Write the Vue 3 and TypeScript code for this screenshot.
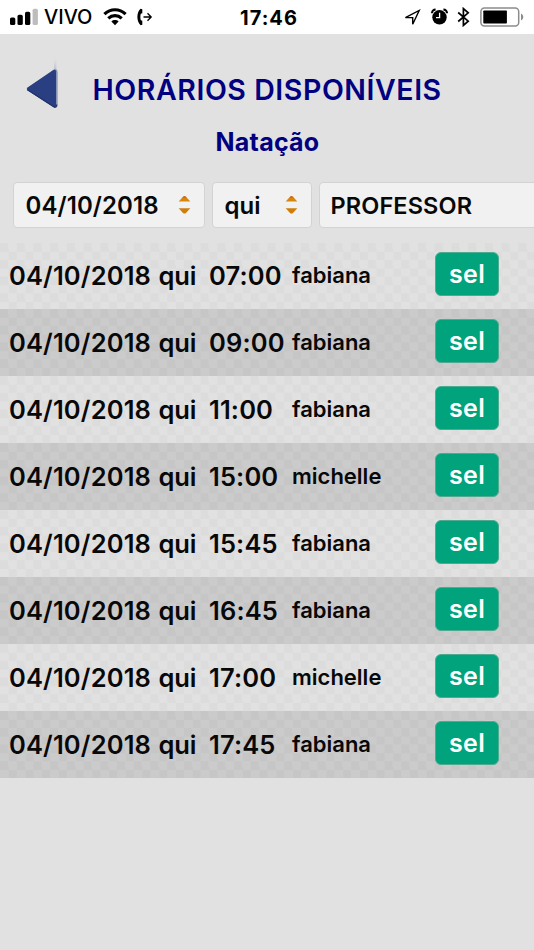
<script setup lang="ts">
interface Slot {
  date: string
  day: string
  time: string
  teacher: string
}

const slots: Slot[] = [
  ['07:00', 'fabiana'],
  ['09:00', 'fabiana'],
  ['11:00', 'fabiana'],
  ['15:00', 'michelle'],
  ['15:45', 'fabiana'],
  ['16:45', 'fabiana'],
  ['17:00', 'michelle'],
  ['17:45', 'fabiana'],
].map(([time, teacher]) => ({ date: '04/10/2018', day: 'qui', time, teacher }))
</script>

<template>
  <main class="screen">
    <header class="status">
      <div class="status-left">
        <svg class="signal" width="28" height="18" viewBox="0 0 28 18">
          <rect x="0" y="9.5" width="5.3" height="7.5" rx="1.6" />
          <rect x="7.5" y="6.8" width="5.3" height="10.2" rx="1.6" />
          <rect x="15" y="3.8" width="5.3" height="13.2" rx="1.6" />
          <rect x="22.6" y="0.7" width="5.3" height="16.3" rx="1.6" fill="#bdbdbd" />
        </svg>
        <span class="carrier">VIVO</span>
        <svg class="wifi" width="24" height="18" viewBox="0 0 24 18">
          <g fill="none" stroke="#000" stroke-width="3.2">
            <path d="M1.4 6.1C7.5.3 16.5.3 22.6 6.1" />
            <path d="M5.3 10.4C9.2 6.7 14.8 6.7 18.7 10.4" />
          </g>
          <path d="M12 17.2L8.4 13.5C10.4 11.6 13.6 11.6 15.6 13.5Z" />
        </svg>
        <svg class="forward" width="16" height="18" viewBox="0 0 16 18">
          <path d="M3.6.8L5.3 1.2V5.2L3.8 5.7C3.2 7.8 3.2 10.2 3.8 12.3L5.3 12.8V16.8L3.6 17.2C-.7 13.5-.7 4.5 3.6.8Z" />
          <path d="M6.5 9H14M10.5 5.2L14.2 9L10.5 12.8" fill="none" stroke="#000" stroke-width="1.3" />
        </svg>
      </div>
      <span class="clock">17:46</span>
      <div class="status-right">
        <svg class="location" width="17" height="17" viewBox="0 0 17 17">
          <path d="M1.4 8.6L15.2 1.5L8.7 15.3V8.6Z" fill="none" stroke="#000" stroke-width="1.4" />
        </svg>
        <svg class="alarm" width="17" height="18" viewBox="0 0 17 18">
          <circle cx="8.5" cy="9.3" r="7.2" />
          <path d="M.9 5.2A4 4 0 0 1 4.6 1.5M12.4 1.5A4 4 0 0 1 16.1 5.2" fill="none" stroke="#000" stroke-width="1.9" />
          <path d="M8.6 4.8V9.7H5" fill="none" stroke="#fff" stroke-width="1.3" />
        </svg>
        <svg class="bluetooth" width="13" height="20" viewBox="0 0 13 20">
          <path d="M1.2 5.5L11.2 14.2L6.4 18.4V1.6L11.2 5.8L1.2 14.5" fill="none" stroke="#000" stroke-width="1.7" />
        </svg>
        <svg class="battery" width="44" height="20" viewBox="0 0 44 20">
          <rect x="0.9" y="1" width="37.8" height="18" rx="3.5" fill="none" stroke="#8c8c8c" stroke-width="1.5" />
          <rect x="3.3" y="3.6" width="23.6" height="12.8" rx="0.7" />
          <path d="M41 6.5C44 8 44 12 41 13.5Z" fill="#8c8c8c" />
        </svg>
      </div>
    </header>

    <section class="heading">
      <button class="back" aria-label="Voltar">
        <svg width="34" height="52" viewBox="0 0 34 52">
          <defs>
            <linearGradient id="tail" x1="0" y1="0" x2="0" y2="1">
              <stop offset="0" stop-color="#d9dce2" stop-opacity="0" />
              <stop offset="1" stop-color="#aeb7cb" />
            </linearGradient>
          </defs>
          <rect x="28" y="0" width="2.4" height="14" fill="url(#tail)" />
          <path d="M2 30.5L28 12.6Q31.6 11.6 31.6 15V48Q31.6 51.2 28.6 50.6L2 33Q.2 31.8 2 30.5Z" fill="#8794b3" />
          <path d="M1.2 30.8L27.8 12.8Q30 12.2 30 14.6V48.7Q30 51 28 50.2L1.5 33.2Q.2 32 1.2 30.8Z" fill="#293f82" />
          <path d="M1.4 32.8L28 49.9Q30.6 50.8 30.8 47.5" fill="none" stroke="#1f3069" stroke-width="1.2" />
        </svg>
      </button>
      <h1>HORÁRIOS DISPONÍVEIS</h1>
      <h2>Natação</h2>
    </section>

    <section class="filters">
      <div class="select">
        <span>04/10/2018</span>
        <svg width="13" height="20" viewBox="0 0 13 20">
          <path d="M.7 6.5L5 1.8Q6.5.8 8 1.8L12.3 6.5Z" fill="#d8860b" />
          <path d="M4.5 2.5Q6.5.2 8.5 2.5Z" fill="#c8502c" />
          <path d="M.7 13.2H12.3L8 17.9Q6.5 18.9 5 17.9Z" fill="#cf7d08" />
        </svg>
      </div>
      <div class="select">
        <span>qui</span>
        <svg width="13" height="20" viewBox="0 0 13 20">
          <path d="M.7 6.5L5 1.8Q6.5.8 8 1.8L12.3 6.5Z" fill="#d8860b" />
          <path d="M4.5 2.5Q6.5.2 8.5 2.5Z" fill="#c8502c" />
          <path d="M.7 13.2H12.3L8 17.9Q6.5 18.9 5 17.9Z" fill="#cf7d08" />
        </svg>
      </div>
      <div class="select professor">
        <span>PROFESSOR</span>
      </div>
    </section>

    <ul class="slots">
      <li v-for="s in slots" :key="s.time" class="slot">
        <span class="date">{{ s.date }}</span>
        <span class="day">{{ s.day }}</span>
        <span class="time">{{ s.time }}</span>
        <span class="teacher">{{ s.teacher }}</span>
        <button class="sel">sel</button>
      </li>
    </ul>
  </main>
</template>

<style>
body {
  background: #e1e1e1;
}
</style>

<style scoped>
.screen {
  width: 534px;
  height: 950px;
  overflow: hidden;
  background: #e1e1e1;
  color: #080808;
  font-family: Inter, "Liberation Sans", sans-serif;
  display: flex;
  flex-direction: column;
}

.status {
  height: 34px;
  flex: none;
  background: #fff;
  display: grid;
  grid-template-columns: 1fr auto 1fr;
  align-items: center;
  box-sizing: border-box;
  padding: 0 10px;
  color: #000;
}

.status svg {
  display: block;
}

.status-left,
.status-right {
  display: flex;
  align-items: center;
}

.status-right {
  justify-content: flex-end;
}

.carrier {
  width: 48px;
  margin: 0 10.5px 0 6px;
  font-size: 20px;
  font-weight: 500;
}

.forward {
  margin-left: 10.5px;
}

.clock {
  font-size: 20px;
  font-weight: 700;
  letter-spacing: 1px;
  padding: 1px 0 0 4px;
}

.alarm {
  margin-left: 10px;
}

.bluetooth {
  margin: 0 10px 0 9px;
}

.heading {
  height: 148px;
  flex: none;
  display: grid;
  grid-template-columns: 92.5px 1fr;
  grid-template-rows: 80px 1fr;
}

.back {
  border: 0;
  background: none;
  padding: 23px 0 6px 26px;
  text-align: left;
  display: flex;
  align-items: flex-start;
}

.back svg {
  display: block;
}

h1,
h2 {
  margin: 0;
  color: #000080;
  white-space: nowrap;
}

h1 {
  font-size: 28.5px;
  line-height: 34px;
  font-weight: 630;
  letter-spacing: 0.57px;
  padding-top: 39px;
}

h2 {
  grid-column: 1 / -1;
  font-size: 25px;
  line-height: 30px;
  font-weight: 680;
  letter-spacing: 0.25px;
  text-align: center;
  padding: 13px 0 0 1px;
}

.filters {
  flex: none;
  height: 60.5px;
  padding-left: 13px;
  display: grid;
  grid-template-columns: 192px 100px 260px;
  gap: 7px;
  align-items: start;
}

.select {
  box-sizing: border-box;
  height: 46px;
  border: 1px solid #d3d3d3;
  border-radius: 4px;
  background: #f1f1f1;
  padding: 0 13px 0 11.5px;
  display: flex;
  align-items: center;
  justify-content: space-between;
  font-size: 24px;
  font-weight: 570;
  letter-spacing: 0.08px;
}

.professor {
  font-size: 23.5px;
  letter-spacing: 0.12px;
  padding-left: 10.5px;
}

.slots {
  list-style: none;
  margin: 0;
  padding: 0;
}

.slot {
  height: 66.88px;
  box-sizing: border-box;
  padding-left: 9px;
  display: grid;
  grid-template-columns: 149.5px 50.5px 83px 143px 64px;
  align-items: center;
  font-size: 25.5px;
  line-height: 29px;
  font-weight: 570;
  letter-spacing: 0.15px;
  white-space: nowrap;
  background: repeating-conic-gradient(#e1e1e1 0 25%, #dcdcdc 0 50%) 0 0 / 16.72px 16.72px;
}

.slot:nth-child(even) {
  background-image: repeating-conic-gradient(#cbcbcb 0 25%, #c6c6c6 0 50%);
}

.day {
  letter-spacing: -0.2px;
}

.time {
  letter-spacing: 0.15px;
}

.teacher {
  font-size: 22px;
  letter-spacing: 0;
}

.sel {
  width: 64px;
  height: 44px;
  margin-top: -3px;
  padding: 0;
  border: 1px solid #4fab90;
  border-radius: 6px;
  background: #00a37c;
  color: #fff;
  font: 580 25px/30px Inter, "Liberation Sans", sans-serif;
  letter-spacing: 0.3px;
}
</style>
